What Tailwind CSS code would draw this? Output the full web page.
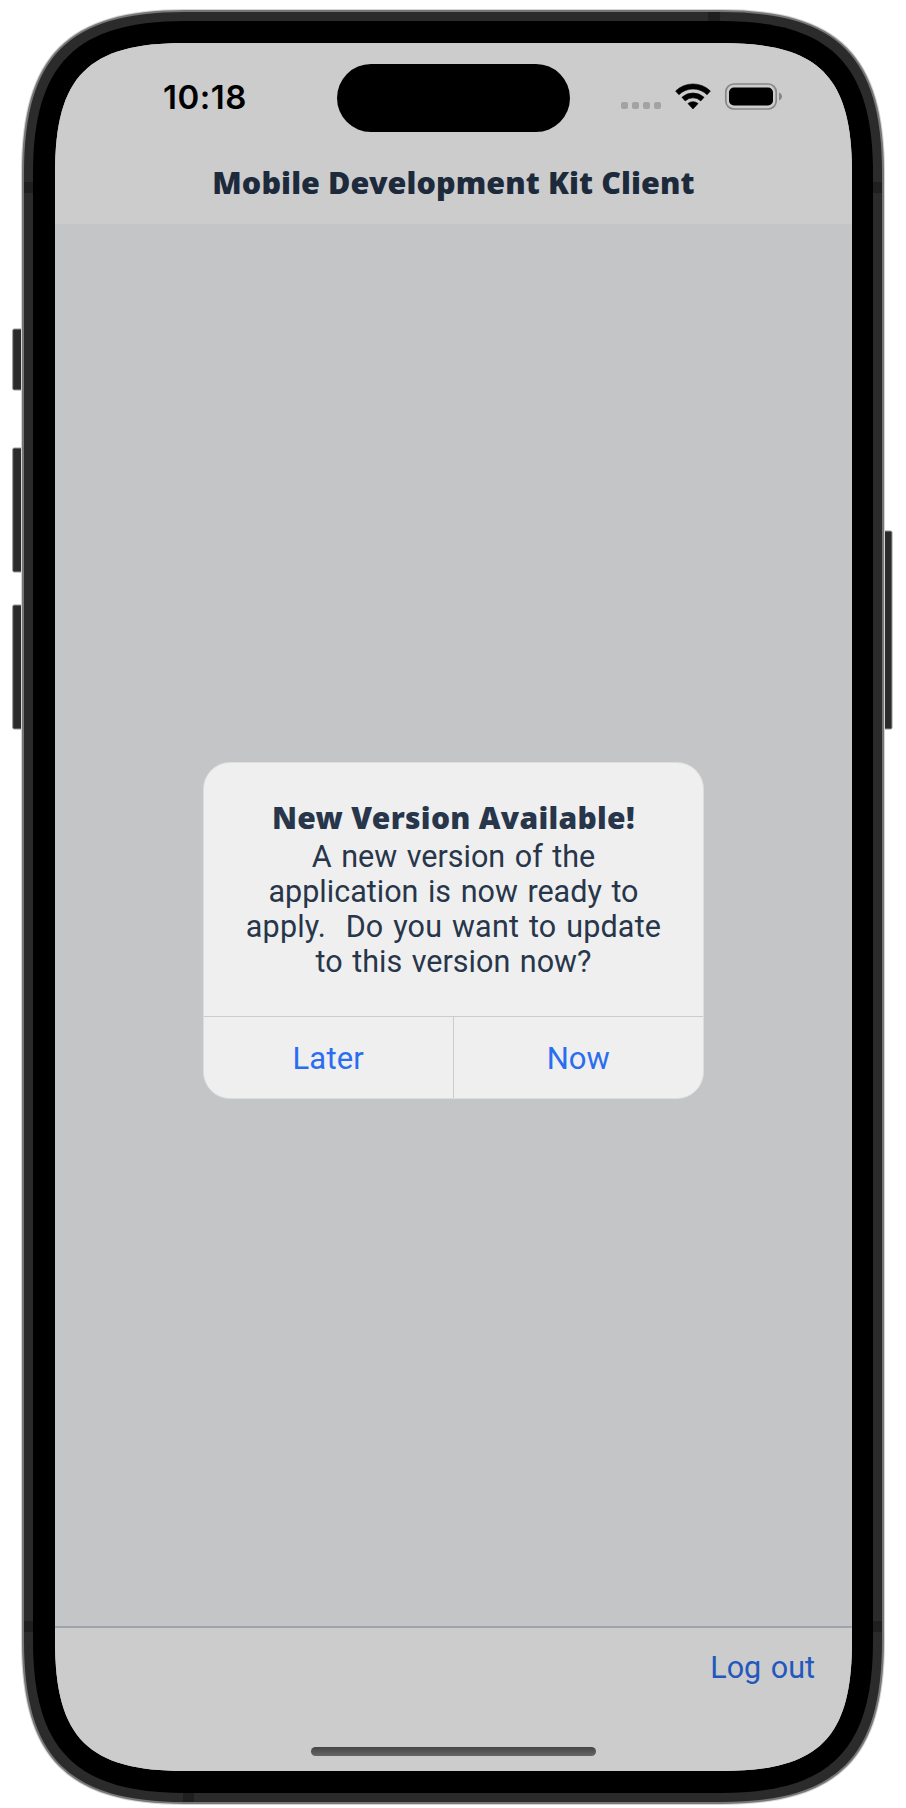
<!DOCTYPE html>
<html lang="en">
<head>
<meta charset="utf-8">
<title>Mobile Development Kit Client</title>
<script src="https://cdn.jsdelivr.net/npm/@tailwindcss/browser@4"></script>
</head>
<body class="bg-white">
<div class="relative w-[906px] h-[1808px] overflow-hidden pt-[43px] pl-[55px]">
  <!-- device body -->
  <svg class="absolute left-0 top-0" width="906" height="1808" viewBox="0 0 906 1808">
    <g fill="#2b2b2b" stroke="#999" stroke-width="1">
      <rect x="12.700" y="329" width="12" height="61" rx="1.500"/>
      <rect x="12.700" y="448" width="12" height="124" rx="1.500"/>
      <rect x="12.700" y="605" width="12" height="124" rx="1.500"/>
      <rect x="880" y="531" width="12" height="198" rx="1.500"/>
    </g>
    <path fill="#2b2b2b" stroke="#d4d4d4" stroke-width="4" d="M23 173C23 56 68 11 185 11H721C838 11 883 56 883 173V1641C883 1758 838 1803 721 1803H185C68 1803 23 1758 23 1641Z"/>
    <path fill="#2b2b2b" stroke="#777" stroke-width="2" d="M23 173C23 56 68 11 185 11H721C838 11 883 56 883 173V1641C883 1758 838 1803 721 1803H185C68 1803 23 1758 23 1641Z"/>
    <g fill="#1f1f1f">
      <rect x="24" y="182" width="9" height="11"/><rect x="873" y="182" width="9" height="11"/>
      <rect x="24" y="1621" width="9" height="11"/><rect x="873" y="1621" width="9" height="11"/>
      <rect x="708" y="12" width="12" height="9"/><rect x="183" y="1793" width="11" height="9"/>
    </g>
    <path d="M33 173C33 64 76 21 185 21H721C830 21 873 64 873 173V1641C873 1750 830 1793 721 1793H185C76 1793 33 1750 33 1641Z"/>
  </svg>

  <!-- screen -->
  <div class="relative flex flex-col w-[797px] h-[1728px] bg-[#c4c5c7] font-['Roboto',sans-serif] [clip-path:path('M0_130C0_33_33_0_130_0H667C764_0_797_33_797_130V1598C797_1695_764_1728_667_1728H130C33_1728_0_1695_0_1598Z')]">
    <header class="h-[181px] shrink-0 bg-[#cccccc]">
      <div class="flex items-start h-[100px] pt-[21px]">
        <div class="w-[282px] pl-[108px] pt-[13px] font-['Inter',sans-serif] font-semibold text-[33px] leading-[40px] tracking-[0.5px] text-black">10:18</div>
        <div class="w-[233px] h-[68px] rounded-full bg-black"></div>
        <svg class="ml-[51px] mt-[17px]" width="164" height="30" viewBox="0 0 164 30">
          <g fill="#a3a3a3"><rect x="0" y="21" width="7" height="7" rx="2"/><rect x="11" y="21" width="7" height="7" rx="2"/><rect x="22" y="21" width="7" height="7" rx="2"/><rect x="33" y="21" width="7" height="7" rx="2"/></g>
          <path stroke="#000" stroke-width=".6" stroke-linejoin="round" d="M54.600 10a25 25 0 0 1 34.800 0l-3.300 3.700a20.300 20.300 0 0 0-28.200 0zM60.900 16.300a16.400 16.400 0 0 1 22.200 0l-3.300 3.600a11.500 11.500 0 0 0-15.600 0zM66.900 22.600a7.600 7.600 0 0 1 10.200 0l-5.100 5.400z"/>
          <rect x="104.800" y="3" width="50.400" height="25" rx="8" fill="none" stroke="#868686" stroke-width="1.700"/>
          <rect x="108" y="6.500" width="44" height="18" rx="5"/>
          <path d="M158 11.500c4 2 4 6 0 8z" fill="#868686"/>
        </svg>
      </div>
      <h1 class="text-center whitespace-nowrap font-['Noto_Sans',sans-serif] font-black text-[30.500px] leading-[40px] tracking-[0.1px] mt-[19px] text-[#1d2a3b]">Mobile Development Kit Client</h1>
    </header>

    <main class="flex-1 flex justify-center items-start pt-[538px]">
      <section class="w-[501px] h-[337px] shrink-0 flex flex-col rounded-[27px] overflow-hidden bg-[#efefef] border border-[#dcdddd] text-[#27364a]">
        <div class="h-[253px] pt-[35px] text-center whitespace-nowrap">
          <h2 class="font-['Noto_Sans',sans-serif] font-black text-[30px] leading-[40px] tracking-[0.300px]">New Version Available!</h2>
          <p class="mt-px text-[30.500px] leading-[35px] [word-spacing:2px] whitespace-pre">A new version of the
application is now ready to
<span class="tracking-[0.2px]">apply.  Do you want to update</span>
to this version now?</p>
        </div>
        <div class="flex-1 grid grid-cols-2 border-t border-[#cccccc] text-[31px] text-[#2a6df0]">
          <button class="pt-[3px] border-r border-[#cccccc] tracking-[0.2px]">Later</button>
          <button class="pt-[3px]">Now</button>
        </div>
      </section>
    </main>

    <footer class="h-[145px] shrink-0 flex flex-col bg-[#cccccc] border-t-2 border-[#9ea4ae]">
      <div class="flex justify-end pr-[37px] pt-[20px] text-[30.500px] leading-[40px] [word-spacing:2px] text-[#2258bd]">Log out</div>
      <div class="mt-[59px] ml-[256px] w-[285px] h-[9px] rounded-full bg-linear-to-b from-[#444] to-[#666]"></div>
    </footer>
  </div>
</div>
</body>
</html>
